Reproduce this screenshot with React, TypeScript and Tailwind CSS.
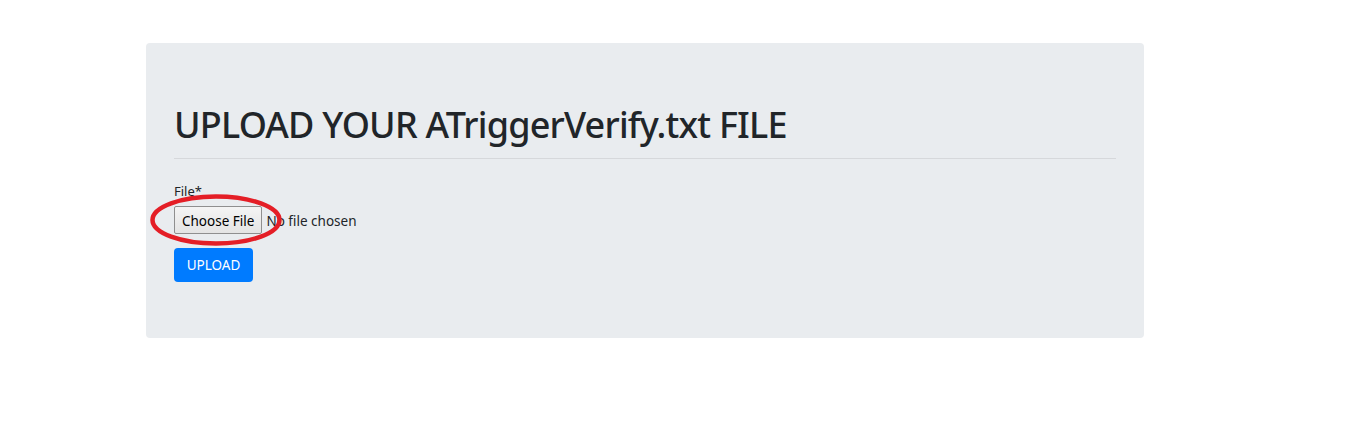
import React from "react";

export default function App() {
  return (
    <div
      className="relative w-[1351px] h-[437px] bg-white text-[#212529]"
      style={{ fontFamily: '"Noto Sans", "Open Sans", Arial, sans-serif' }}
    >
      <div className="pt-[43px] pl-[146px]">
        <div className="w-[998px] h-[295px] bg-[#e9ecef] rounded-[4px] px-[28px] pt-[58px]">
          <h1 className="text-[36px] leading-[48px] font-medium tracking-[-0.8px] text-[#212529]">
            UPLOAD YOUR ATriggerVerify.txt FILE
          </h1>
          <div className="mt-[9px] h-px bg-[#d6d8db]" />
          <div className="mt-[22px] text-[13px] leading-[20px]">File*</div>
          <div className="mt-[5px] flex items-center h-[28px]">
            <div className="h-[28px] pt-[2px] px-[7px] flex items-center border border-[#8f8f8f] rounded-[2px] bg-gradient-to-b from-[#f4f4f4] to-[#e4e4e4] text-[13.5px] text-black">
              Choose File
            </div>
            <span className="ml-[4px] pt-[2px] text-[13.5px] text-[#212529]">No file chosen</span>
          </div>
          <button className="mt-[14px] h-[34px] w-[79px] rounded-[4px] bg-[#007bff] text-white text-[13.5px] flex items-center justify-center">
            UPLOAD
          </button>
        </div>
      </div>
      <svg
        className="absolute left-0 top-0 pointer-events-none"
        width="1351"
        height="437"
      >
        <ellipse
          cx="216"
          cy="220"
          rx="63.5"
          ry="23.5"
          fill="none"
          stroke="#e41e26"
          strokeWidth="4.5"
        />
      </svg>
    </div>
  );
}
